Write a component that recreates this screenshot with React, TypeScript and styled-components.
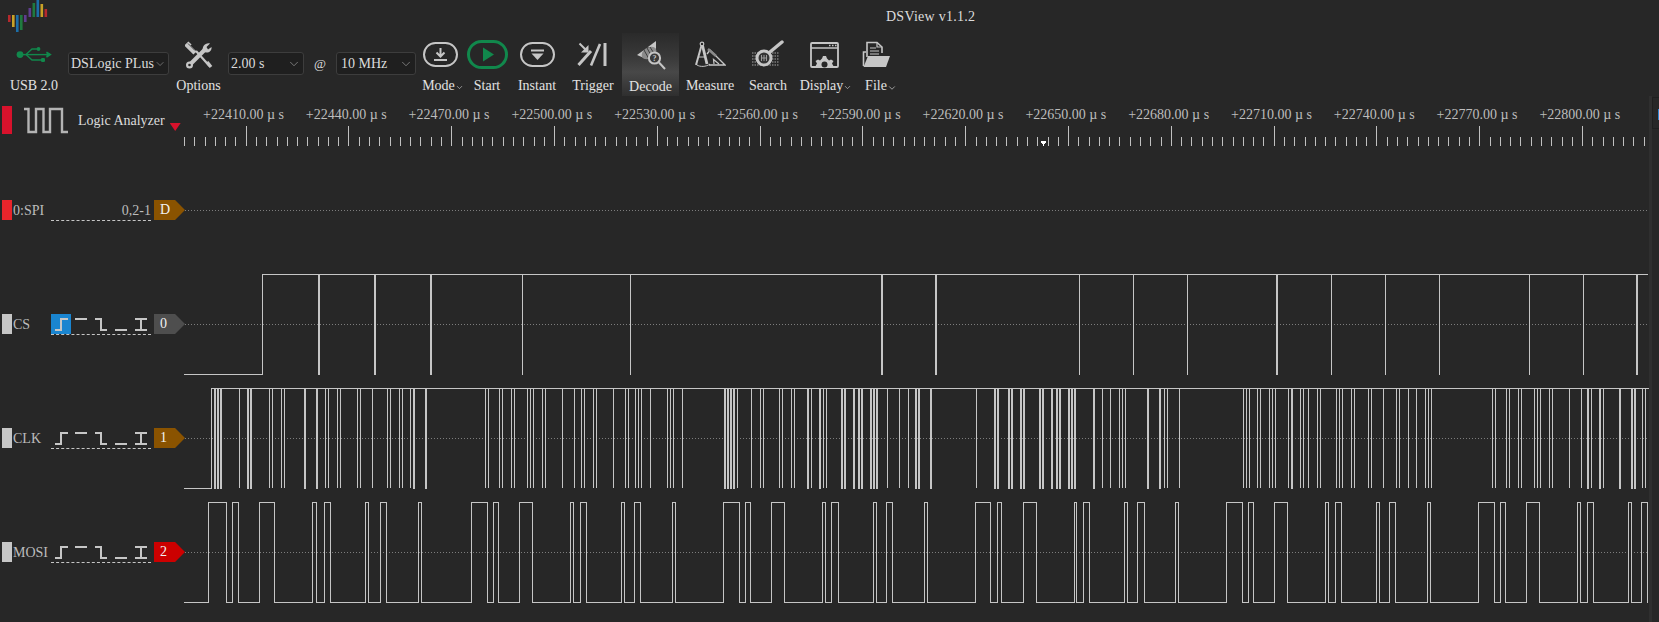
import React from 'react'
import styled, { createGlobalStyle } from 'styled-components'
import { ChevronDown } from 'lucide-react'

const GREY = '#c6c6c6'

const GlobalStyle = createGlobalStyle`
  html, body { margin: 0; padding: 0; background: #272727; }
  body { font-family: "Liberation Serif", "Noto Sans CJK TC", serif; }
`

// capture helpers: the edge lists were read off 3x crops of the traces
const thin = (base: number, list: number[]) => list.map((p) => base + Math.floor(p / 3) + 0.5)
const thick = (base: number, list: number[]) => list.map((p) => base + Math.round(p / 3))

const CS_THIN = [522, 630, 1079, 1133, 1187, 1331, 1385, 1439, 1529, 1583].map((x) => x + 0.5)
const CS_THICK = [319, 375, 431, 882, 936, 1277, 1637]

const CLK_THIN = [
  ...thin(180, [94, 178, 269, 277, 305, 313, 437, 445, 473, 481, 533, 541, 577, 623, 631, 659, 667, 691, 916, 925, 959, 967, 995, 1003, 1043, 1052, 1060, 1088, 1096, 1147, 1183, 1205, 1213, 1241, 1249, 1300, 1336, 1345, 1367, 1376, 1384, 1411, 1462, 1471, 1480]),
  ...thin(680, [7, 172, 214, 241, 250, 298, 307, 335, 343, 394, 431, 439, 622, 658, 685, 889, 1267, 1291, 1319, 1327, 1336, 1454, 1462, 1498]),
  ...thin(1159, [254, 263, 271, 296, 304, 332, 340, 349, 389, 424, 433, 448, 476, 484, 533, 541, 550, 578, 586, 629, 637, 673, 713, 721, 748, 772, 800, 808, 817, 1000, 1009, 1042, 1051, 1078, 1087, 1126, 1136, 1144, 1172, 1180, 1231, 1267, 1297, 1333, 1451, 1459]),
]
const CLK_THICK = [
  ...thick(180, [104, 113, 122, 204, 213, 375, 411, 702, 738]),
  ...thick(680, [135, 144, 153, 162, 384, 420, 487, 495, 522, 537, 546, 573, 582, 591, 708, 717, 753, 945, 954, 987, 996, 1023, 1032, 1080, 1089, 1116, 1131, 1140, 1167, 1176, 1185, 1242, 1404, 1440]),
  ...thick(1159, [399, 1287, 1323, 1383, 1419, 1428]),
]

const MOSI_EDGES = [
  ...thin(180, [85, 140, 158, 176, 239, 284, 398, 410, 434, 452, 557, 566, 602, 620, 716, 724, 875, 923, 941, 956, 1019, 1058, 1172, 1181, 1202, 1220, 1325, 1334, 1364, 1382, 1478, 1487]),
  ...thin(680, [131, 179, 197, 212, 275, 314, 428, 437, 455, 476, 581, 590, 620, 638, 734, 743, 887, 932, 953, 965, 1031, 1070, 1183, 1190, 1211, 1229, 1334, 1343, 1373, 1394]),
  ...thin(1159, [50, 59, 203, 251, 269, 284, 347, 386, 500, 509, 530, 548, 653, 662, 692, 710, 806, 815, 959, 1007, 1025, 1040, 1103, 1142, 1256, 1265, 1286, 1304, 1409, 1418, 1448, 1466]),
]

const LOGO_BARS = [
  { x: 8, y: 15, h: 7, c: '#b5292d' },
  { x: 12, y: 15, h: 12, c: '#c9a227' },
  { x: 16, y: 15, h: 17, c: '#1c6ea8' },
  { x: 20, y: 15, h: 15, c: '#1f7a3f' },
  { x: 24, y: 15, h: 7, c: '#5f3d8f' },
  { x: 28.5, y: 8, h: 9, c: '#5f3d8f' },
  { x: 32.5, y: 3, h: 14, c: '#1f7a3f' },
  { x: 36.5, y: 0, h: 17, c: '#1c6ea8' },
  { x: 40.5, y: 4, h: 13, c: '#c9a227' },
  { x: 44.5, y: 9, h: 8, c: '#b5292d' },
]

const Logo = () => (
  <LogoSvg viewBox="0 0 48 33">
    {LOGO_BARS.map((b) => (
      <rect key={b.x} x={b.x} y={b.y} width="2.6" height={b.h} fill={b.c} />
    ))}
  </LogoSvg>
)

const UsbIcon = () => (
  <svg width="36" height="18" viewBox="0 0 36 18" fill="none" stroke="#11884c" strokeWidth="1.4">
    <circle cx="4" cy="8.6" r="3.4" fill="#11884c" stroke="none" />
    <path d="M4 8.6H34" />
    <path d="M30.5 6L34.5 8.6L30.5 11.2" fill="#11884c" />
    <path d="M10 8.6L16 3H22" />
    <circle cx="22.5" cy="3" r="1.9" fill="#11884c" stroke="none" />
    <path d="M10 8.6L16 14H26" />
    <rect x="25" y="12" width="4" height="4" rx="1.2" fill="#11884c" stroke="none" />
  </svg>
)

const OptionsIcon = () => (
  <svg width="28" height="28" viewBox="0 0 28 28" fill="none" stroke={GREY}>
    <path d="M5 2L2.500 4.500L10 12" strokeWidth="4.500" />
    <path d="M3 2.500L10 9.500M5.500 1L12 8" stroke="#272727" strokeWidth="0.8" />
    <path d="M11 10L24.500 25" strokeWidth="2.200" />
    <path d="M22 21L26 26" strokeWidth="3.400" />
    <path d="M4.500 24L20 8.500" strokeWidth="4" />
    <path d="M18 10.500C16.500 6 20 1.500 25 2.500L21.500 6L23 8.500L26.500 6C27.200 11 22 13 18 10.500Z" fill={GREY} stroke="none" />
    <circle cx="4.500" cy="24" r="3.500" fill={GREY} stroke="none" />
    <circle cx="4.500" cy="24" r="1.300" fill="#272727" stroke="none" />
  </svg>
)

const Pill = ({ children, color = GREY, big }: { children: React.ReactNode; color?: string; big?: boolean }) => {
  const w = big ? 41 : 35
  const h = big ? 29 : 25
  const sw = big ? 3 : 2
  return (
    <svg width={w} height={h} viewBox={`0 0 ${w} ${h}`} fill="none">
      <rect x={sw / 2} y={sw / 2} width={w - sw} height={h - sw} rx={(h - sw) / 2} stroke={color} strokeWidth={sw} />
      {children}
    </svg>
  )
}

const TriggerIcon = () => (
  <svg width="32" height="25" viewBox="0 0 32 25" fill="none" stroke={GREY}>
    <path d="M2.500 1.500L10.500 9.500" strokeWidth="2" />
    <path d="M11.500 3V10.500H4Z" fill={GREY} stroke="none" />
    <path d="M1.500 23L14 9" strokeWidth="3" />
    <path d="M14 23.500L23 2" strokeWidth="2.600" />
    <path d="M28 1V24" strokeWidth="3" />
  </svg>
)

const DecodeIcon = () => (
  <svg width="30" height="30" viewBox="0 0 30 30" fill="none" stroke={GREY}>
    <path d="M1 15L8 10L8 18Z" fill={GREY} stroke="none" />
    <path d="M20 1L20 9L12 7Z" fill={GREY} stroke="none" />
    <ellipse cx="13" cy="13" rx="8" ry="5.500" transform="rotate(-32 13 13)" fill="#8b8b8b" stroke="none" />
    <path d="M8 10L13 19M11 8L16 17M14 7L19 15" stroke="#3e3e3e" strokeWidth="1" />
    <circle cx="18.500" cy="18" r="5.600" fill="#3a3a3a" strokeWidth="2" />
    <path d="M23 22.500L29 29" strokeWidth="2" />
    <text x="18.500" y="21" textAnchor="middle" fontSize="8" fontWeight="700" fill={GREY} stroke="none">?</text>
  </svg>
)

const MeasureIcon = () => (
  <svg width="32" height="27" viewBox="0 0 32 27" fill="none" stroke={GREY}>
    <circle cx="8" cy="3" r="1.800" strokeWidth="1.200" />
    <path d="M7.500 4.500L2 24" strokeWidth="2" />
    <path d="M8.500 4.500L13 23" strokeWidth="2.800" />
    <path d="M3 24C6 26 12 26 16 23" strokeWidth="1" />
    <path d="M4 16H12" strokeWidth="1" />
    <path d="M15 24H31L16 9L13 13" strokeWidth="1.400" />
    <path d="M20 23L19.500 18.500L25 23" strokeWidth="1.200" />
    <path d="M14 8L22 15" stroke="#8a8a8a" strokeWidth="2.500" />
  </svg>
)

const SearchIcon = () => (
  <svg width="34" height="30" viewBox="0 0 34 30" fill="none" stroke={GREY}>
    <path d="M1 13H28M1 16H28M1 19H28M1 22H28M1 25H28" stroke="#7c7c7c" strokeWidth="1.600" strokeDasharray="1.500 1" />
    <circle cx="13" cy="18" r="7" fill="#333" strokeWidth="3" />
    <path d="M10.500 15V21M13 15V21M15.500 15V21M10 18H16" stroke="#9a9a9a" strokeWidth="1" />
    <path d="M19 12L31 2" strokeWidth="3.400" strokeLinecap="round" />
  </svg>
)

const DisplayIcon = () => (
  <svg width="29" height="26" viewBox="0 0 29 26" fill="none" stroke={GREY}>
    <rect x="1" y="1" width="27" height="24" rx="1" strokeWidth="1.800" />
    <path d="M1 6H28" strokeWidth="1.500" />
    <path d="M19 3.500H20.500M22 3.500H23.500M25 3.500H26.500" strokeWidth="1.600" />
    <path d="M5 25L7 21.500L5.500 19L8 17.500L10 18.500L12 16.500L13 14H16L17 16.500L19 18.500L21 17.500L23.500 19L22 21.500L24 25Z" fill={GREY} stroke="none" />
    <circle cx="14.500" cy="22.500" r="3" fill="#272727" stroke="none" />
  </svg>
)

const FileIcon = () => (
  <svg width="29" height="27" viewBox="0 0 29 27" fill="none" stroke={GREY}>
    <path d="M5 16V1.500H15L20 6V12" strokeWidth="1.600" />
    <path d="M15 1.500V6H20" strokeWidth="1.200" />
    <path d="M8 7H14M8 10H17M8 13H17" strokeWidth="1.200" />
    <path d="M1.500 25V11H4" strokeWidth="1.600" />
    <path d="M1.500 26L6 15H28L24 26Z" fill={GREY} stroke="none" />
  </svg>
)

const EDGE_ICONS = ['M4 16H10V5H17', 'M4 5H16', 'M4 5H10V16H16', 'M4 16H16', 'M4 5H16M10 5V16M4 16H16']

const TriggerPicker = ({ active }: { active?: boolean }) => (
  <PickerRow>
    {EDGE_ICONS.map((d, i) => (
      <EdgeCell key={d} $active={!!active && i === 0}>
        <svg width="20" height="20" viewBox="0 0 20 20" fill="none" stroke={GREY} strokeWidth="2">
          <path d={d} />
        </svg>
      </EdgeCell>
    ))}
  </PickerRow>
)

const Select = ({ width, value, labelLeft }: { width: number; value: string; labelLeft?: number }) => (
  <SelectBox $w={width} $pad={labelLeft ?? 2}>
    <span>{value}</span>
    <ChevronDown size={14} strokeWidth={1.1} color="#a8a8a8" />
  </SelectBox>
)

const TICKS = Array.from({ length: 146 }, (_, i) => 184 + i * 10.28)
const LABELS = Array.from({ length: 14 }, (_, i) => ({
  x: 203 + i * 102.8,
  text: `+${22410 + (i < 13 ? i * 30 : 390)}.00 µ s`,
}))

const Chart = () => {
  const clkD = CLK_THIN.map((x) => `M${x} 388V488`).join('') + 'M184 488.500H211.500M211 388.500H1649'
  const clkThickD = CLK_THICK.map((x) => `M${x} 388V489`).join('')
  const csD = CS_THIN.map((x) => `M${x} 274V375`).join('') + 'M184 374.500H262.500V274.500H1648'
  const csThickD = CS_THICK.map((x) => `M${x} 274V375`).join('')

  let mosi = 'M184 602.500'
  MOSI_EDGES.forEach((x, i) => {
    mosi += `H${x}V${i % 2 === 0 ? 502.5 : 602.5}`
  })

  return (
    <ChartSvg viewBox="184 96 1465 526" width="1465" height="526" fill="none" shapeRendering="crispEdges">
      {LABELS.map((l) => (
        <RulerText key={l.x} x={l.x} y={118.5}>
          {l.text}
        </RulerText>
      ))}
      {TICKS.map((x, i) => (
        <path
          key={x}
          d={`M${Math.round(x) + 0.5} ${i % 10 === 6 ? 126 : 137}V146`}
          stroke="#c0c0c0"
        />
      ))}
      <path d="M1040.500 141H1046.500L1043.500 146Z" fill="#fff" />

      {[210, 324, 438, 552].map((y) => (
        <path key={y} d={`M185 ${y + 0.5}H1649`} stroke="#7d7d7d" strokeDasharray="1 2" />
      ))}

      <path d={csD} stroke={GREY} />
      <path d={csThickD} stroke={GREY} strokeWidth="2" />
      <path d={clkD} stroke={GREY} />
      <path d={clkThickD} stroke={GREY} strokeWidth="2" />
      <path d={mosi} stroke={GREY} />
    </ChartSvg>
  )
}

const App = () => (
  <Page>
    <GlobalStyle />
    <TitleBar>
      <Logo />
      <Title>DSView v1.1.2</Title>
    </TitleBar>

    <Toolbar>
      <Tool $w={68}>
        <IconSlot><UsbIcon /></IconSlot>
        <ToolLabel>USB 2.0</ToolLabel>
      </Tool>
      <SelectSlot><Select width={101} value="DSLogic PLus" /></SelectSlot>
      <Tool $w={59}>
        <IconSlot><OptionsIcon /></IconSlot>
        <ToolLabel>Options</ToolLabel>
      </Tool>
      <SelectSlot><Select width={76} value="2.00 s" /></SelectSlot>
      <AtSign>@</AtSign>
      <SelectSlot><Select width={80} value="10 MHz" labelLeft={4} /></SelectSlot>
      <Tool $w={48}>
        <IconSlot>
          <Pill>
            <path d="M17.500 6V14M13.500 10.500L17.500 14.500L21.500 10.500" stroke={GREY} strokeWidth="2" />
            <path d="M11 18H24" stroke={GREY} strokeWidth="2" />
          </Pill>
        </IconSlot>
        <ToolLabel $shift={3}>Mode<ChevronDown size={9} strokeWidth={1.5} /></ToolLabel>
      </Tool>
      <Tool $w={46}>
        <IconSlot>
          <Pill big color="#11884c">
            <path d="M16 7.500L27 14.500L16 21.500Z" fill="#11884c" />
          </Pill>
        </IconSlot>
        <ToolLabel>Start</ToolLabel>
      </Tool>
      <Tool $w={54}>
        <IconSlot>
          <Pill>
            <path d="M11 7.500H24V9.500H11Z" fill={GREY} />
            <path d="M11.500 11.500H23.500L17.500 18Z" fill={GREY} />
          </Pill>
        </IconSlot>
        <ToolLabel>Instant</ToolLabel>
      </Tool>
      <Tool $w={58}>
        <IconSlot><TriggerIcon /></IconSlot>
        <ToolLabel>Trigger</ToolLabel>
      </Tool>
      <Tool $w={57} $active>
        <IconSlot><DecodeIcon /></IconSlot>
        <ToolLabel $low>Decode</ToolLabel>
      </Tool>
      <Tool $w={62}>
        <IconSlot><MeasureIcon /></IconSlot>
        <ToolLabel>Measure</ToolLabel>
      </Tool>
      <Tool $w={54}>
        <IconSlot><SearchIcon /></IconSlot>
        <ToolLabel>Search</ToolLabel>
      </Tool>
      <Tool $w={58}>
        <IconSlot><DisplayIcon /></IconSlot>
        <ToolLabel $shift={2}>Display<ChevronDown size={9} strokeWidth={1.5} /></ToolLabel>
      </Tool>
      <Tool $w={46}>
        <IconSlot><FileIcon /></IconSlot>
        <ToolLabel $shift={5}>File <ChevronDown size={10} strokeWidth={1.5} /></ToolLabel>
      </Tool>
    </Toolbar>

    <Viewport>
      <Headers>
        <AnalyzerRow>
          <Marker $color="#d8122c" $h={28} />
          <svg width="44" height="27" viewBox="0 0 44 27" fill="none" stroke="#b4b4b4" strokeWidth="2.400">
            <path d="M0 2H4.500V25H12V2H19.500V25H26V2H38V25H44" />
          </svg>
          <AnalyzerName>Logic Analyzer</AnalyzerName>
          <ModeCaret />
        </AnalyzerRow>

        <ChannelRow>
          <Marker $color="#e8252b" />
          <ChannelName>0:SPI</ChannelName>
          <ProbeInfo>0,2-1</ProbeInfo>
          <Badge $color="#8a5300">D</Badge>
        </ChannelRow>
        <ChannelRow>
          <Marker $color="#c6c6c6" />
          <ChannelName>CS</ChannelName>
          <TriggerPicker active />
          <Badge $color="#4e4e4e">0</Badge>
        </ChannelRow>
        <ChannelRow>
          <Marker $color="#c6c6c6" />
          <ChannelName>CLK</ChannelName>
          <TriggerPicker />
          <Badge $color="#8a5300">1</Badge>
        </ChannelRow>
        <ChannelRow>
          <Marker $color="#c6c6c6" />
          <ChannelName>MOSI</ChannelName>
          <TriggerPicker />
          <Badge $color="#cc0000">2</Badge>
        </ChannelRow>
      </Headers>

      <Chart />

      <ScrollStrip>
        <SideTab />
      </ScrollStrip>
    </Viewport>
  </Page>
)

export default App

const Page = styled.div`
  width: 1659px;
  height: 622px;
  background: #272727;
  overflow: hidden;
  display: flex;
  flex-direction: column;
`
const TitleBar = styled.div`
  height: 33px;
  display: flex;
  align-items: flex-start;
`
const LogoSvg = styled.svg`
  width: 48px;
  height: 33px;
  flex: none;
`
const Title = styled.div`
  margin: 8px 0 0 838px;
  font-size: 14px;
  line-height: 18px;
  letter-spacing: 0.25px;
  color: #dcdcdc;
`
const Toolbar = styled.div`
  height: 63px;
  display: flex;
  align-items: stretch;
`
const Tool = styled.div<{ $w: number; $active?: boolean }>`
  width: ${(p) => p.$w}px;
  flex: none;
  display: flex;
  flex-direction: column;
  align-items: center;
  background: ${(p) => (p.$active ? 'linear-gradient(#2a2a2a 0%, #3a3a3a 40%, #484848 62%, #2f2f2f 100%)' : 'none')};
`
const IconSlot = styled.div`
  height: 43px;
  display: flex;
  align-items: center;
  justify-content: center;
`
const ToolLabel = styled.div<{ $low?: boolean; $shift?: number }>`
  margin-top: ${(p) => (p.$low ? 2 : 1)}px;
  margin-left: ${(p) => (p.$shift ?? 0) * 2}px;
  font-size: 14px;
  line-height: 18px;
  color: #e2e2e2;
  white-space: nowrap;
  display: flex;
  align-items: center;

  svg {
    margin-top: 3px;
  }
`
const SelectSlot = styled.div`
  flex: none;
  padding-top: 19px;
`
const SelectBox = styled.div<{ $w: number; $pad: number }>`
  width: ${(p) => p.$w}px;
  height: 23px;
  box-sizing: border-box;
  border: 1px solid #3d3d3d;
  border-radius: 3px;
  background: #1f1f1f;
  padding: 0 2px 0 ${(p) => p.$pad}px;
  display: flex;
  align-items: center;
  justify-content: space-between;
  font-size: 14px;
  color: #dcdcdc;
  white-space: nowrap;
`
const AtSign = styled.div`
  width: 32px;
  flex: none;
  padding-top: 22px;
  text-align: center;
  font-size: 13px;
  line-height: 18px;
  color: #dcdcdc;
`
const Viewport = styled.div`
  flex: 1;
  display: grid;
  grid-template-columns: 184px 1465px 10px;
`
const Headers = styled.div`
  display: flex;
  flex-direction: column;
`
const AnalyzerRow = styled.div`
  height: 57px;
  box-sizing: border-box;
  padding: 10px 0 0 2px;
  display: flex;
  align-items: flex-start;

  svg {
    margin: 1px 0 0 12px;
    flex: none;
  }
`
const Marker = styled.div<{ $color: string; $h?: number }>`
  width: 10px;
  height: ${(p) => p.$h ?? 20}px;
  flex: none;
  background: ${(p) => p.$color};
`
const AnalyzerName = styled.div`
  margin: 6px 0 0 10px;
  font-size: 14px;
  line-height: 18px;
  color: #dcdcdc;
  white-space: nowrap;
`
const ModeCaret = styled.div`
  margin: 17px 0 0 5px;
  width: 11px;
  height: 8px;
  flex: none;
  background: #d8122c;
  clip-path: polygon(0 0, 100% 0, 50% 100%);
`
const ChannelRow = styled.div`
  height: 114px;
  padding-left: 2px;
  display: flex;
  align-items: center;
`
const ChannelName = styled.div`
  width: 39px;
  flex: none;
  padding: 2px 0 0 1px;
  box-sizing: border-box;
  font-size: 14px;
  color: #bcbcbc;
`
const ProbeInfo = styled.div`
  width: 100px;
  height: 20px;
  flex: none;
  border-bottom: 1px dashed #c6c6c6;
  text-align: right;
  font-size: 14px;
  line-height: 22px;
  color: #bcbcbc;
`
const PickerRow = styled.div`
  width: 100px;
  flex: none;
  display: flex;
  border-bottom: 1px dashed #c6c6c6;
`
const EdgeCell = styled.div<{ $active: boolean }>`
  width: 20px;
  height: 20px;
  background: ${(p) => (p.$active ? '#1a85d0' : 'none')};

  svg {
    display: block;
  }
`
const Badge = styled.div<{ $color: string }>`
  width: 31px;
  height: 20px;
  flex: none;
  margin-left: 3px;
  box-sizing: border-box;
  padding-left: 6px;
  background: ${(p) => p.$color};
  clip-path: polygon(0 0, 68% 0, 100% 50%, 68% 100%, 0 100%);
  font-size: 14px;
  line-height: 20px;
  color: #f2f2f2;
`
const ChartSvg = styled.svg`
  display: block;
`
const RulerText = styled.text`
  font-family: "Liberation Serif", serif;
  font-size: 14px;
  fill: #bdbdbd;
`
const ScrollStrip = styled.div`
  position: relative;
  border-left: 3px solid #2f2f2f;
`
const SideTab = styled.div`
  position: absolute;
  top: 1px;
  right: 0;
  width: 7px;
  height: 32px;
  box-sizing: border-box;
  border: 1px solid #1f1f1f;
  border-right: none;

  &::after {
    content: '';
    position: absolute;
    top: 11px;
    right: 0;
    width: 1px;
    height: 11px;
    background: #2f86d0;
  }
`
